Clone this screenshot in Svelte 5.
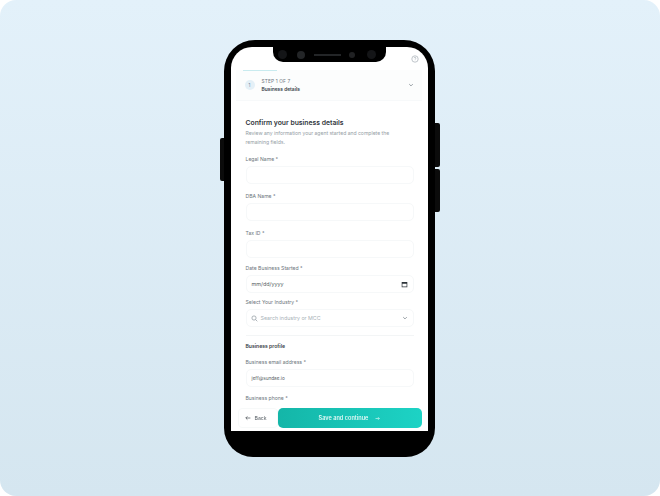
<script>
  const fields = [
    { label: 'Legal Name *', value: '' },
    { label: 'DBA Name *', value: '' },
    { label: 'Tax ID *', value: '' }
  ];
</script>

<main class="page">
  <div class="phone">
    <i class="side left"></i>
    <i class="side right-a"></i>
    <i class="side right-b"></i>

    <div class="notch" aria-hidden="true">
      <i class="cam"></i><i class="cam small"></i><i class="speaker"></i><i class="cam tiny"></i><i class="cam last"></i>
    </div>

    <div class="screen">
      <div class="topbar">
        <svg viewBox="0 0 12 12" width="8" height="8" fill="none" stroke="#a9b1b8" stroke-width="1.1"><circle cx="6" cy="6" r="4.8" /><path d="M4.6 4.8a1.4 1.4 0 1 1 2 1.3c-.4.2-.6.5-.6.9" /><path d="M6 8.6v.3" /></svg>
      </div>

      <section class="step">
        <i class="step-line"></i>
        <span class="badge">1</span>
        <div class="step-text">
          <small>STEP 1 OF 7</small>
          <b>Business details</b>
        </div>
        <svg class="chev" viewBox="0 0 10 10" width="6" height="6" fill="none" stroke="#7d868e" stroke-width="1.3"><path d="M2 3.5 5 6.5 8 3.5" /></svg>
      </section>

      <form class="form">
        <h1>Confirm your business details</h1>
        <p class="desc">Review any information your agent started and complete the remaining fields.</p>

        {#each fields as f}
          <div class="field">
            <span class="label">{f.label}</span>
            <div class="input"></div>
          </div>
        {/each}

        <div class="field date">
          <span class="label">Date Business Started *</span>
          <div class="input">
            <span class="val">mm/dd/yyyy</span>
            <svg viewBox="0 0 10 10" width="7" height="7"><path fill="#2c3338" d="M1 1.5h8v7.5H1zM2 4v4h6V4z" fill-rule="evenodd" /></svg>
          </div>
        </div>

        <div class="field industry">
          <span class="label">Select Your Industry *</span>
          <div class="input">
            <svg viewBox="0 0 10 10" width="7" height="7" fill="none" stroke="#8b959c" stroke-width="1"><circle cx="4.3" cy="4.3" r="3" /><path d="M6.6 6.6 9 9" /></svg>
            <span class="ph">Search industry or MCC</span>
            <svg class="push" viewBox="0 0 10 10" width="6" height="6" fill="none" stroke="#7d868e" stroke-width="1.3"><path d="M2 3.5 5 6.5 8 3.5" /></svg>
          </div>
        </div>

        <hr />

        <h2>Business profile</h2>

        <div class="field profile">
          <span class="label">Business email address *</span>
          <div class="input"><span class="val email">jeff@sundae.io</span></div>
        </div>

        <div class="field phone-field">
          <span class="label">Business phone *</span>
        </div>
      </form>

      <footer class="actions">
        <button type="button" class="back">
          <svg viewBox="0 0 10 10" width="6" height="6" fill="none" stroke="#3a4248" stroke-width="1.1"><path d="M9 5H1.5M4 2.3 1.3 5 4 7.7" /></svg>
          Back
        </button>
        <button type="button" class="save">
          Save and continue
          <svg viewBox="0 0 10 10" width="5" height="5" fill="none" stroke="#e6fbf8" stroke-width="1.2"><path d="M1 5h7.5M6 2.3 8.7 5 6 7.7" /></svg>
        </button>
      </footer>
    </div>
  </div>
</main>

<style>
  :global(body) { margin: 0; background: #fff; font-family: Inter, "Liberation Sans", sans-serif; }
  .page { width: 660px; height: 496px; box-sizing: border-box; padding: 40px 2px 0 0; display: flex; justify-content: center; align-items: flex-start; border-radius: 16px; background: linear-gradient(180deg, #e3f1fa 0%, #d5e6f0 100%); overflow: hidden; }

  .phone { position: relative; width: 211px; height: 417px; box-sizing: border-box; padding: 7px 7px 26px 7px; background: #000; border-radius: 31px 31px 29px 29px; }
  .side { position: absolute; background: #0b0b0b; }
  .left { left: -4px; top: 98px; width: 4px; height: 43px; border-radius: 2px 0 0 2px; }
  .right-a { right: -5px; top: 83px; width: 5px; height: 44px; border-radius: 0 2px 2px 0; }
  .right-b { right: -5px; top: 129px; width: 5px; height: 43px; border-radius: 0 2px 2px 0; }

  .notch { position: absolute; z-index: 2; left: 49px; top: 7px; width: 113px; height: 15px; box-sizing: border-box; padding-left: 5px; display: flex; align-items: center; background: #000; border-radius: 0 0 10px 10px; }
  .cam { width: 9px; height: 9px; border-radius: 50%; background: #141517; }
  .cam.small { width: 8px; height: 8px; margin-left: 10px; background: #232527; }
  .speaker { width: 27px; height: 2px; margin-left: 9px; background: #232527; }
  .cam.tiny { width: 6px; height: 6px; margin-left: 8px; background: #202123; }
  .cam.last { margin-left: 12px; }

  .screen { position: relative; height: 100%; display: flex; flex-direction: column; overflow: hidden; background: #fff; border-radius: 21px 21px 0 0; filter: blur(0.4px); }
  .topbar { flex: none; height: 23px; display: flex; justify-content: flex-end; align-items: flex-end; padding-right: 9px; box-sizing: border-box; padding-bottom: 7px; }

  .step { position: relative; flex: none; height: 30px; margin-left: 5px; margin-right: 6px; display: flex; align-items: center; gap: 7px; padding: 0 8px 0 9px; background: #fcfdfd; border-bottom: 1px solid #f7f9fa; }
  .step-line { position: absolute; left: 7px; top: 0; width: 34px; height: 1px; background: #c9ebef; }
  .badge { width: 10px; height: 10px; border-radius: 50%; background: #e4f0f7; color: #6c8597; font-size: 4.5px; display: flex; align-items: center; justify-content: center; }
  .step-text { display: flex; flex-direction: column; gap: 2px; }
  .step-text small { font-size: 4.8px; letter-spacing: .03em; color: #6f7880; line-height: 6px; }
  .step-text b { font-size: 4.9px; font-weight: 600; color: #3a4248; line-height: 7px; }
  .chev { margin-left: auto; }

  .form { flex: 1; min-height: 0; overflow: hidden; padding: 16px 14px 0 15px; }
  h1 { margin: 0; font-size: 6.8px; line-height: 11px; font-weight: 600; color: #30363c; }
  .desc { max-width: 150px; margin: 1px 0 1px; font-size: 5.05px; line-height: 9px; color: #959ea5; }

  .field { margin-top: 9px; }
  .label { display: block; font-size: 5.1px; line-height: 7px; color: #6c757c; }
  .input { height: 18px; margin-top: 3px; box-sizing: border-box; display: flex; align-items: center; gap: 3px; padding: 0 5px; border: 1px solid #f6f8f9; border-radius: 5px; }
  .date { margin-top: 7px; }
  .date .input { justify-content: space-between; }
  .industry { margin-top: 6px; }
  .industry .input { padding-left: 4px; }
  .val { font-size: 5.4px; color: #555d63; }
  .val.email { font-size: 4.7px; }
  .ph { font-size: 5.3px; color: #a9b2b8; }
  .push { margin-left: auto; }

  hr { height: 1px; margin: 8px 0 0; border: 0; background: #f3f5f6; }
  h2 { margin: 7px 0 0; font-size: 5.1px; line-height: 7px; font-weight: 600; color: #3a4248; }
  .profile { margin-top: 9px; }
  .phone-field { margin-top: 8px; }

  .actions { flex: none; height: 26px; box-sizing: border-box; display: flex; align-items: flex-start; padding: 3px 6px 0 7px; background: #fff; }
  .actions button { font-family: inherit; border: 0; cursor: pointer; }
  .back { width: 40px; height: 20px; box-sizing: border-box; padding: 0 0 0 7px; display: flex; align-items: center; gap: 4px; background: #fff; border-radius: 4px; outline: 1px solid #f7f9f9; outline-offset: -1px; font-size: 5.2px; color: #596167; }
  .save { flex: 1; height: 20px; padding: 0; display: flex; align-items: center; justify-content: center; gap: 7px; border-radius: 5px; background: linear-gradient(90deg, #14b6a8 0%, #1dd3c5 100%); color: #dff8f5; font-size: 5.6px; font-weight: 600; }
</style>
